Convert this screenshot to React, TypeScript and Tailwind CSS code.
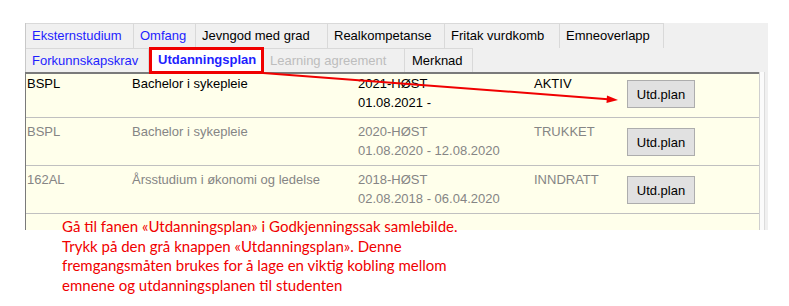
const tabsTop = [
  { label: "Eksternstudium", w: "w-[108px]", tone: "text-[#1e1eff]" },
  { label: "Omfang", w: "w-[62px]", tone: "text-[#1e1eff]" },
  { label: "Jevngod med grad", w: "w-[132px]", tone: "text-black" },
  { label: "Realkompetanse", w: "w-[117px]", tone: "text-black" },
  { label: "Fritak vurdkomb", w: "w-[115px]", tone: "text-black" },
  { label: "Emneoverlapp", w: "w-[104px]", tone: "text-black" },
];

const rows = [
  { code: "BSPL", name: "Bachelor i sykepleie", term: "2021-HØST", dates: "01.08.2021 -", status: "AKTIV", active: true },
  { code: "BSPL", name: "Bachelor i sykepleie", term: "2020-HØST", dates: "01.08.2020 - 12.08.2020", status: "TRUKKET", active: false },
  { code: "162AL", name: "Årsstudium i økonomi og ledelse", term: "2018-HØST", dates: "02.08.2018 - 06.04.2020", status: "INNDRATT", active: false },
];

export default function App() {
  return (
    <div className="relative w-[789px] h-[306px] bg-white overflow-hidden font-['Liberation_Sans',Arial,sans-serif] text-[13px]">
      <div className="ml-[25px] pt-[23px] w-[743px]">
        <div className="bg-[#f0f0f0] border-l border-[#c8c8c8]">
          {/* first tab row */}
          <div className="flex h-[25px]">
            {tabsTop.map((t) => (
              <div
                key={t.label}
                className={`${t.w} ${t.tone} flex items-center pl-[6px] border-t border-r border-[#d9d9d9]`}
              >
                {t.label}
              </div>
            ))}
          </div>
          {/* second tab row */}
          <div className="flex h-[24px]">
            <div className="w-[123px] flex items-center pl-[6px] border-r border-t border-[#d9d9d9] text-[#1e1eff]">
              Forkunnskapskrav
            </div>
            <div className="w-[115px] flex items-center pl-[9px] bg-white font-bold text-[#1e1eff]">
              Utdanningsplan
            </div>
            <div className="w-[141px] flex items-center pl-[6px] border-r border-t border-[#d9d9d9] text-[#bdbdbd]">
              Learning agreement
            </div>
            <div className="w-[68px] flex items-center pl-[7px] border-r border-t border-[#d9d9d9] text-black">
              Merknad
            </div>
          </div>
        </div>

        {/* table */}
        <div className="flex h-[158px]">
          <div className="w-[734px] bg-[#ffffeb] border-l border-t-2 border-[#7a7a7a]">
            {rows.map((r, i) => (
              <div
                key={i}
                className={`flex border-b border-[#c0c0c0] ${i === 0 ? "h-[44px]" : "h-[48px] pt-[4px]"} ${
                  r.active ? "text-black" : "text-[#858585]"
                } leading-[19px]`}
              >
                <div className="w-[106px] pl-[1px]">{r.code}</div>
                <div className="w-[226px]">{r.name}</div>
                <div className="w-[176px]">
                  <div>{r.term}</div>
                  <div>{r.dates}</div>
                </div>
                <div className="w-[93px]">{r.status}</div>
                <div className="pt-[6px]">
                  <button className="w-[68px] h-[28px] bg-[#e1e1e1] border border-[#adadad] text-black leading-none">
                    Utd.plan
                  </button>
                </div>
              </div>
            ))}
          </div>
          <div className="flex w-[9px] bg-[#f0f0f0]">
            <div className="w-[1px] bg-[#cfcfcf]" />
            <div className="w-[4px] bg-[#fbfbfb]" />
            <div className="w-[1px] bg-[#dcdcdc]" />
          </div>
        </div>
      </div>

      {/* highlight around the active tab */}
      <div className="absolute left-[149px] top-[47px] w-[115px] h-[27px] border-[3px] border-[#f00000]" />

      {/* pointer arrow */}
      <svg className="absolute left-0 top-0" width="789" height="306" viewBox="0 0 789 306">
        <line x1="263" y1="73" x2="608" y2="99.2" stroke="#f00000" strokeWidth="2" />
        <polygon points="618,100 607,95.5 606.5,103" fill="#f00000" />
      </svg>

      {/* note */}
      <div className="absolute left-[62px] top-[217px] font-['Lato',sans-serif] text-[15px] leading-[19.5px] text-[#f00000]">
        Gå til fanen «Utdanningsplan» i Godkjenningssak samlebilde.
        <br />
        Trykk på den grå knappen «Utdanningsplan». Denne
        <br />
        fremgangsmåten brukes for å lage en viktig kobling mellom
        <br />
        emnene og utdanningsplanen til studenten
      </div>
    </div>
  );
}
